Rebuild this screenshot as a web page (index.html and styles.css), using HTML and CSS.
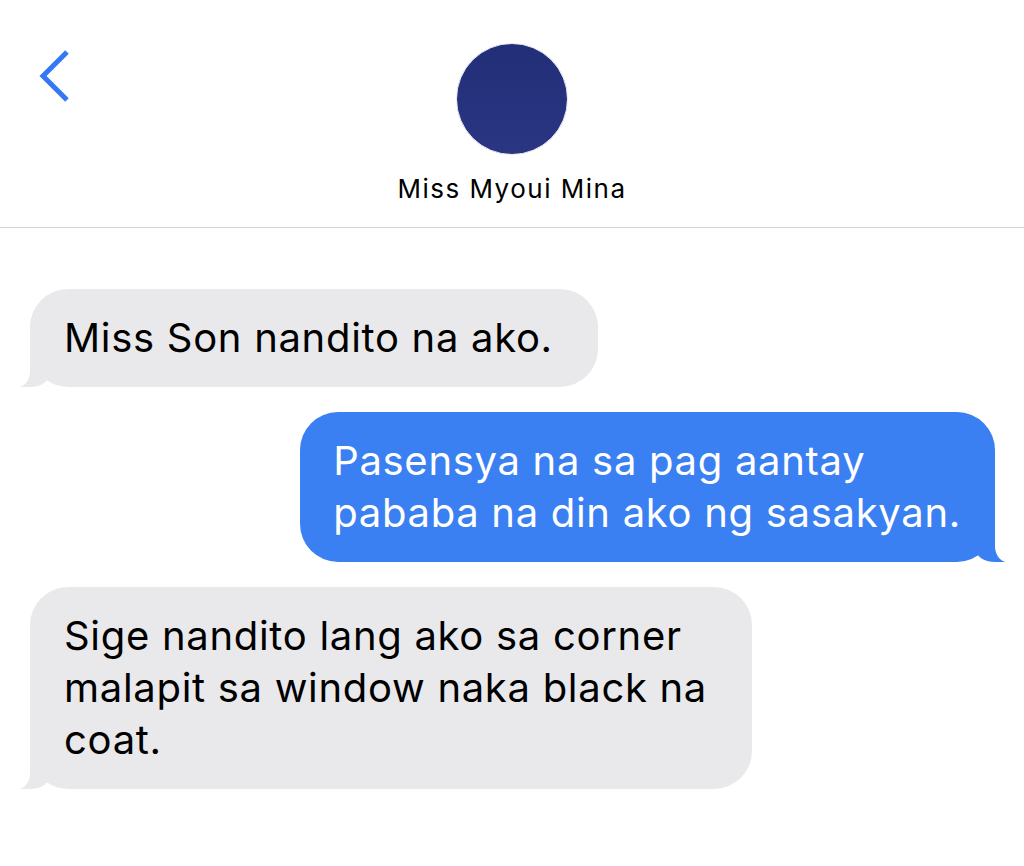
FILE: index.html
```html
<!DOCTYPE html>
<html lang="tl">
<head>
    <meta charset="UTF-8">
    <meta name="viewport" content="width=device-width, initial-scale=1.0">
    <title>Miss Myoui Mina</title>
    <link rel="stylesheet" href="styles.css">
</head>
<body>
    <header class="topbar">
        <a class="back" href="#" aria-label="Back">
            <svg width="34" height="56" viewBox="0 0 34 56">
                <polyline points="29,4 5,28 29,52" fill="none" stroke="#3478f6" stroke-width="5" stroke-linejoin="miter"/>
            </svg>
        </a>
        <div class="contact">
            <div class="avatar"></div>
            <div class="name">Miss Myoui Mina</div>
        </div>
        <div class="side"></div>
    </header>

    <main class="thread">
        <div class="bubble in">Miss Son nandito na ako.</div>
        <div class="bubble out">Pasensya na sa pag aantay<br>pababa na din ako ng sasakyan.</div>
        <div class="bubble in">Sige nandito lang ako sa corner<br>malapit sa window naka black na<br>coat.</div>
    </main>
</body>
</html>
```

FILE: styles.css
```css
body {
    margin: 0;
    background: #fff;
    font-family: Inter, Roboto, "Liberation Sans", sans-serif;
    color: #000;
}
.topbar {
    display: grid;
    grid-template-columns: 1fr auto 1fr;
    height: 227px;
    border-bottom: 1px solid #d1d1d6;
}
.back {
    padding: 48px 0 0 38px;
    align-self: start;
}
.back svg {
    display: block;
}
.contact {
    display: flex;
    flex-direction: column;
    align-items: center;
    padding-top: 43px;
}
.avatar {
    width: 110px;
    height: 110px;
    border-radius: 50%;
    background: linear-gradient(180deg, #222e78 0%, #2a3681 100%);
    border: 1px solid #e6e7ee;
}
.name {
    margin-top: 18px;
    font-size: 26px;
    letter-spacing: 1.5px;
}
.thread {
    display: flex;
    flex-direction: column;
    gap: 25px;
    padding: 61px 29px 0 30px;
}
.bubble {
    position: relative;
    padding: 23px 45px 23px 34px;
    font-size: 40px;
    line-height: 52px;
    letter-spacing: 0.7px;
    border-radius: 38px;
}
.bubble::before,
.bubble::after {
    content: "";
    position: absolute;
    bottom: 0;
    height: 40px;
}
.in {
    align-self: flex-start;
    background: #e9e9eb;
}
.in::before {
    left: -10px;
    width: 30px;
    background: #e9e9eb;
    border-bottom-right-radius: 20px 14px;
}
.in::after {
    left: -30px;
    width: 30px;
    background: #fff;
    border-bottom-right-radius: 12px 16px;
}
.out {
    align-self: flex-end;
    background: #3b80f2;
    color: #fff;
    padding: 23px 34px 23px 33px;
}
.out::before {
    right: -10px;
    width: 30px;
    background: #3b80f2;
    border-bottom-left-radius: 20px 14px;
}
.out::after {
    right: -30px;
    width: 30px;
    background: #fff;
    border-bottom-left-radius: 12px 16px;
}
```
